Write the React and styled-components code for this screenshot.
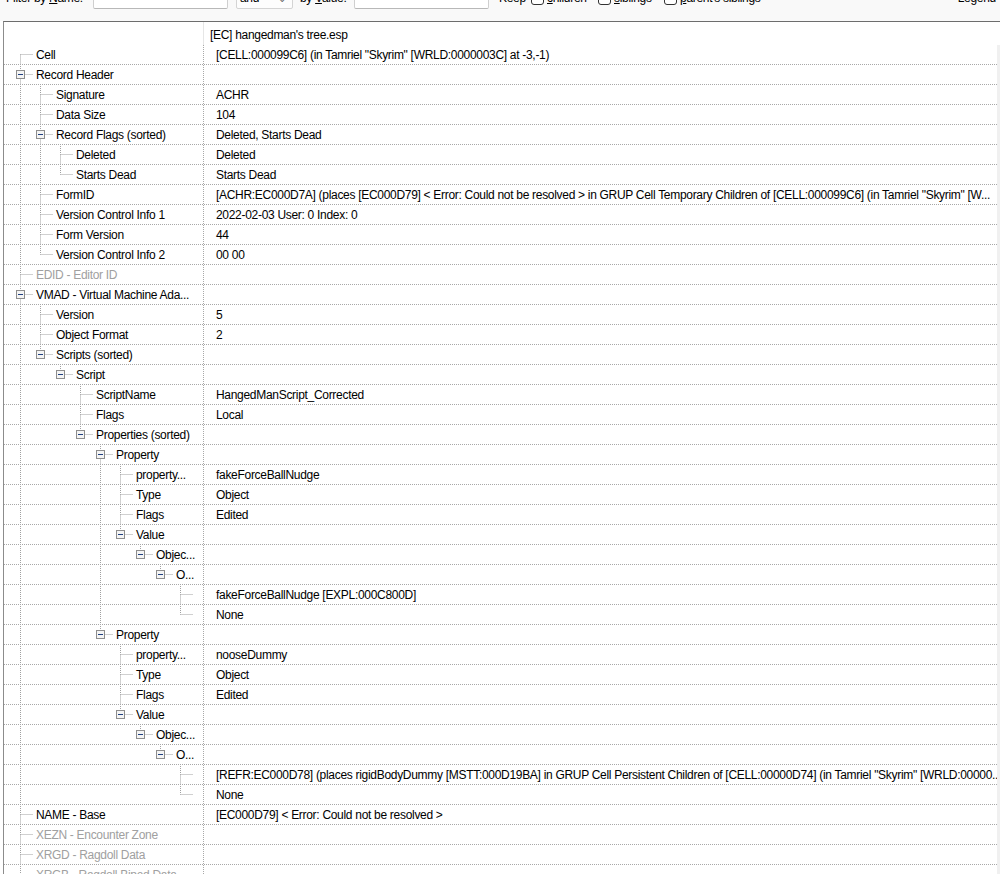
import styled, { createGlobalStyle } from 'styled-components';

const GlobalStyle = createGlobalStyle`
    html, body {
        margin : 0;
        padding : 0;
        overflow : hidden;
        background : #ffffff;
    }
    body {
        font-family : "Liberation Sans", Arial, sans-serif;
        font-size : 12px;
        color : #000000;
    }
`;

// [level, name, value, { box, gray }]
const ROWS = [
    [0, 'Cell', '[CELL:000099C6] (in Tamriel "Skyrim" [WRLD:0000003C] at -3,-1)'],
    [0, 'Record Header', '', { box : true }],
    [1, 'Signature', 'ACHR'],
    [1, 'Data Size', '104'],
    [1, 'Record Flags (sorted)', 'Deleted, Starts Dead', { box : true }],
    [2, 'Deleted', 'Deleted'],
    [2, 'Starts Dead', 'Starts Dead'],
    [1, 'FormID', '[ACHR:EC000D7A] (places [EC000D79] < Error: Could not be resolved > in GRUP Cell Temporary Children of [CELL:000099C6] (in Tamriel "Skyrim" [W...'],
    [1, 'Version Control Info 1', '2022-02-03 User: 0 Index: 0'],
    [1, 'Form Version', '44'],
    [1, 'Version Control Info 2', '00 00'],
    [0, 'EDID - Editor ID', '', { gray : true }],
    [0, 'VMAD - Virtual Machine Ada...', '', { box : true }],
    [1, 'Version', '5'],
    [1, 'Object Format', '2'],
    [1, 'Scripts (sorted)', '', { box : true }],
    [2, 'Script', '', { box : true }],
    [3, 'ScriptName', 'HangedManScript_Corrected'],
    [3, 'Flags', 'Local'],
    [3, 'Properties (sorted)', '', { box : true }],
    [4, 'Property', '', { box : true }],
    [5, 'property...', 'fakeForceBallNudge'],
    [5, 'Type', 'Object'],
    [5, 'Flags', 'Edited'],
    [5, 'Value', '', { box : true }],
    [6, 'Objec...', '', { box : true }],
    [7, 'O...', '', { box : true }],
    [8, '', 'fakeForceBallNudge [EXPL:000C800D]'],
    [8, '', 'None'],
    [4, 'Property', '', { box : true }],
    [5, 'property...', 'nooseDummy'],
    [5, 'Type', 'Object'],
    [5, 'Flags', 'Edited'],
    [5, 'Value', '', { box : true }],
    [6, 'Objec...', '', { box : true }],
    [7, 'O...', '', { box : true }],
    [8, '', '[REFR:EC000D78] (places rigidBodyDummy [MSTT:000D19BA] in GRUP Cell Persistent Children of [CELL:00000D74] (in Tamriel "Skyrim" [WRLD:00000...'],
    [8, '', 'None'],
    [0, 'NAME - Base', '[EC000D79] < Error: Could not be resolved >'],
    [0, 'XEZN - Encounter Zone', '', { gray : true }],
    [0, 'XRGD - Ragdoll Data', '', { gray : true }],
    [0, 'XRGB - Ragdoll Biped Data', '', { gray : true }],
];

const hasNextSibling = (index) => {
    const level = ROWS[index][0];
    for (let i = index + 1; i < ROWS.length; i++) {
        if (ROWS[i][0] < level) return false;
        if (ROWS[i][0] === level) return true;
    }
    return false;
};

const buildTree = () => {
    const stack = [];
    return ROWS.map(([level, name, value, opts = {}], index) => {
        stack.length = level;
        const cont = stack.slice();
        const next = hasNextSibling(index);
        stack[level] = next;
        return { level, name, value, ...opts, cont, next, first : index === 0 };
    });
};

const LINE = '#a0a0a0';

const TreeLines = ({ level, cont, next, first, box }) => {
    const width = 32 + level * 20;
    const x = 16.5 + level * 20;
    return (
        <svg width={width} height="19" style={{ flex : 'none', overflow : 'visible' }}>
            <g stroke={LINE} strokeWidth="1" strokeDasharray="1 1" fill="none">
                {cont.map((c, d) => c && (
                    <line key={d} x1={16.5 + d * 20} y1="-1" x2={16.5 + d * 20} y2="20" />
                ))}
                {!first && <line x1={x} y1="-1" x2={x} y2="9.5" />}
                {next && <line x1={x} y1="9.5" x2={x} y2="20" />}
                <line x1={x} y1="9.5" x2={29 + level * 20} y2="9.5" />
            </g>
            {box && (
                <g>
                    <rect x={x - 4} y="5.5" width="8" height="8" fill="#f4f4f4" stroke="#8d8d8d" />
                    <line x1={x - 2.5} y1="9.5" x2={x + 2.5} y2="9.5" stroke="#1f3f80" />
                </g>
            )}
        </svg>
    );
};

const App = () => {
    const tree = buildTree();
    return (
        <Page>
            <GlobalStyle />
            <Toolbar>
                <ToolRow>
                    <Label width={87}>Filter by <u>N</u>ame:</Label>
                    <TextBox width={135} />
                    <SelectBox>
                        <span>and</span>
                        <Chevron>⌄</Chevron>
                    </SelectBox>
                    <Label width={54} gap={7}>by <u>V</u>alue:</Label>
                    <TextBox width={135} />
                    <Label width={32} gap={10}>Keep</Label>
                    <CheckItem width={67}><Box /><span><u>c</u>hildren</span></CheckItem>
                    <CheckItem width={66}><Box /><span><u>s</u>iblings</span></CheckItem>
                    <CheckItem width={120}><Box /><span><u>p</u>arent's siblings</span></CheckItem>
                    <Legend>Legend</Legend>
                </ToolRow>
            </Toolbar>
            <Panel>
                <HeaderRow>
                    <HeaderName />
                    <HeaderValue>[EC] hangedman's tree.esp</HeaderValue>
                </HeaderRow>
                <Body>
                    <Rows>
                        {tree.map((row, i) => (
                            <Row key={i}>
                                <NameCell gray={row.gray}>
                                    <TreeLines {...row} />
                                    <NameText>{row.name}</NameText>
                                </NameCell>
                                <ValueCell>{row.value}</ValueCell>
                            </Row>
                        ))}
                    </Rows>
                    <ScrollStrip />
                </Body>
            </Panel>
        </Page>
    );
};

const Page = styled.div`
    width : 1000px;
    height : 874px;
    overflow : hidden;
    background : #ffffff;
    letter-spacing : -0.3px;
`;

const Toolbar = styled.div`
    height : 21px;
    overflow : hidden;
    background : #f9f9f9;
`;

const ToolRow = styled.div`
    display : flex;
    align-items : center;
    height : 22px;
    margin-top : -13px;
    padding-left : 6px;
    padding-right : 4px;
    white-space : nowrap;
`;

const Label = styled.div`
    width : ${({ width }) => width}px;
    margin-left : ${({ gap }) => gap || 0}px;
    flex : none;
`;

const TextBox = styled.div`
    width : ${({ width }) => width}px;
    height : 22px;
    box-sizing : border-box;
    flex : none;
    background : #ffffff;
    border : 1px solid #cfcfcf;
    border-bottom-color : #b8b8b8;
    border-radius : 2px;
`;

const SelectBox = styled.div`
    width : 57px;
    height : 22px;
    margin-left : 8px;
    box-sizing : border-box;
    flex : none;
    display : flex;
    align-items : center;
    justify-content : space-between;
    padding : 0 6px 0 3px;
    background : #fdfdfd;
    border : 1px solid #d4d4d4;
    border-radius : 2px;
`;

const Chevron = styled.span`
    font-size : 10px;
    color : #666666;
`;

const CheckItem = styled.div`
    width : ${({ width }) => width}px;
    flex : none;
    display : flex;
    align-items : center;
    gap : 3px;
`;

const Box = styled.div`
    width : 13px;
    height : 13px;
    box-sizing : border-box;
    border : 1px solid #333333;
    border-radius : 3px;
    background : #ffffff;
    flex : none;
`;

const Legend = styled.div`
    margin-left : auto;
`;

const Panel = styled.div`
    margin-left : 3px;
    border-top : 1px solid #6d6d6d;
    border-left : 1px solid #8c8c8c;
`;

const HeaderRow = styled.div`
    display : flex;
    height : 23px;
`;

const HeaderName = styled.div`
    width : 199px;
    flex : none;
    border-right : 1px solid #e6e6e6;
`;

const HeaderValue = styled.div`
    padding-left : 6px;
    padding-top : 3px;
    line-height : 20px;
    white-space : nowrap;
`;

const Body = styled.div`
    display : flex;
`;

const Rows = styled.div`
    flex : 1;
    min-width : 0;
`;

const ScrollStrip = styled.div`
    width : 3px;
    flex : none;
    background : #f0f0f0;
`;

const Row = styled.div`
    display : flex;
    height : 20px;
    box-sizing : border-box;
    border-bottom : 1px dotted #a8a8a8;
`;

const NameCell = styled.div`
    width : 199px;
    flex : none;
    display : flex;
    align-items : flex-start;
    overflow : hidden;
    color : ${({ gray }) => gray ? '#a0a0a0' : '#000000'};
`;

const NameText = styled.span`
    white-space : nowrap;
    padding-top : 3px;
    line-height : 15px;
`;

const ValueCell = styled.div`
    flex : 1;
    min-width : 0;
    padding-left : 12px;
    padding-top : 3px;
    line-height : 15px;
    white-space : nowrap;
    overflow : hidden;
    border-left : 1px dotted #a8a8a8;
`;

export default App;
